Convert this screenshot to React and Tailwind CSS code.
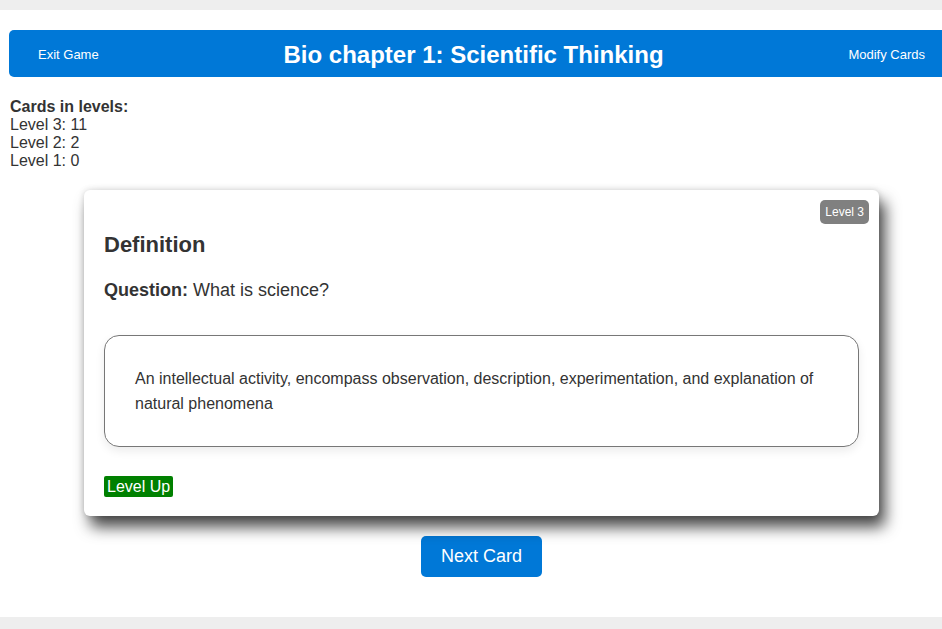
import React from 'react';

const levels = [
    { label: 'Level 3', count: 11 },
    { label: 'Level 2', count: 2 },
    { label: 'Level 1', count: 0 },
];

const App = () => {
    return (
        <div className="h-[629px] w-full overflow-hidden bg-[#eeeeee] pt-[10px] font-['Liberation_Sans',Arial,sans-serif] text-[#333333]">
            <div className="h-[607px] w-[963px] bg-white pt-[20px]">
                {/* Header */}
                <header className="ml-[9px] flex h-[47px] w-[942px] items-center justify-between rounded-[5px] bg-[#0078d7] pl-[29px] pr-[26px] pt-[2px] text-white">
                    <button className="text-[13px]">Exit Game</button>
                    <h1 className="text-[24px] font-bold leading-none">Bio chapter 1: Scientific Thinking</h1>
                    <button className="text-[13px]">Modify Cards</button>
                </header>

                {/* Level counts */}
                <div className="ml-[10px] mt-[21px] text-[16px] leading-[18px]">
                    <div className="font-bold">Cards in levels:</div>
                    {levels.map((l) => (
                        <div key={l.label}>
                            {l.label}: {l.count}
                        </div>
                    ))}
                </div>

                {/* Card */}
                <div className="relative ml-[84px] mt-[20px] w-[795px] rounded-[6px] bg-white px-[20px] pb-[19px] pt-[20px] shadow-[6px_11px_15px_rgba(0,0,0,0.72),0_0_6px_rgba(0,0,0,0.15)]">
                    <span className="absolute right-[10px] top-[10px] flex h-[24px] items-center rounded-[5px] bg-[#808080] px-[5px] text-[12px] text-white">
                        Level 3
                    </span>
                    <h3 className="mt-[23px] text-[22px] font-bold leading-[24px]">Definition</h3>
                    <p className="mt-[23px] text-[18px] leading-[20px]">
                        <span className="font-bold">Question:</span> What is science?
                    </p>
                    <div className="mt-[35px] rounded-[15px] border border-[#777777] px-[30px] pb-[30px] pt-[30px] text-[16px] leading-[25px] shadow-[0_4px_10px_rgba(0,0,0,0.08)]">
                        An intellectual activity, encompass observation, description, experimentation, and explanation of natural phenomena
                    </div>
                    <button className="mt-[29px] block h-[21px] rounded-[2px] bg-[#008000] px-[3px] text-[16px] leading-[21px] text-white">
                        Level Up
                    </button>
                </div>

                {/* Next */}
                <div className="ml-[84px] mt-[20px] flex w-[795px] justify-center">
                    <button className="h-[41px] w-[121px] rounded-[5px] bg-[#0078d7] text-[18px] text-white">
                        Next Card
                    </button>
                </div>
            </div>
        </div>
    );
};

export default App;
